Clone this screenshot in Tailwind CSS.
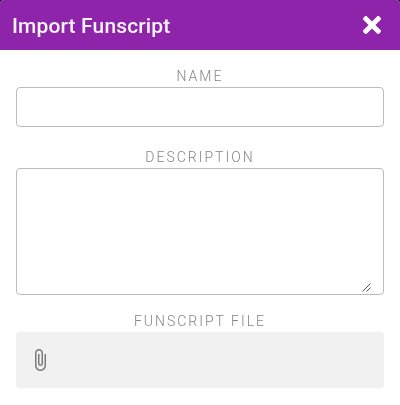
<!DOCTYPE html>
<html lang="en">
<head>
<meta charset="utf-8">
<title>Import Funscript</title>
<script src="https://cdn.jsdelivr.net/npm/@tailwindcss/browser@4"></script>
</head>
<body class="bg-black font-[Roboto,sans-serif]">
<main class="h-[405px] w-[400px] overflow-hidden rounded-t bg-white">
  <header class="flex h-[50px] items-center justify-between bg-[#8e24aa] pl-3 pr-[19px] text-white">
    <h1 class="pt-[2px] text-[21px] leading-6 font-medium tracking-[0.14px] text-white/95 will-change-transform">Import Funscript</h1>
    <button aria-label="Close"><svg class="block h-[26px] w-[18px]" viewBox="0 0 352 512" fill="currentColor"><path d="M242.72 256l100.07-100.07c12.28-12.28 12.28-32.19 0-44.48l-22.24-22.24c-12.28-12.28-32.19-12.28-44.48 0L176 189.28 75.93 89.21c-12.28-12.28-32.19-12.28-44.48 0L9.21 111.45c-12.28 12.28-12.28 32.19 0 44.48L109.28 256 9.21 356.07c-12.28 12.28-12.28 32.19 0 44.48l22.24 22.24c12.28 12.28 32.2 12.28 44.48 0L176 322.72l100.07 100.07c12.28 12.28 32.2 12.28 44.48 0l22.24-22.24c12.28-12.28 12.28-32.19 0-44.48L242.72 256z"/></svg></button>
  </header>
  <form class="flex flex-col px-4 pt-4">
    <label for="name" class="h-[21px] text-center text-[14px] leading-[21px] font-light tracking-[2px] text-[#858585] will-change-transform">NAME</label>
    <input id="name" class="h-10 rounded border border-[#bcbcbc] px-3 outline-none">
    <label for="description" class="mt-5 h-[21px] text-center text-[14px] leading-[21px] font-light tracking-[2px] text-[#858585] will-change-transform">DESCRIPTION</label>
    <div class="flex h-[127px] items-end rounded border border-[#bcbcbc] pr-[12px] pb-[2px] pl-3">
      <textarea id="description" class="block h-[123px] w-full resize-none outline-none"></textarea>
      <svg class="h-[9px] w-[9px] shrink-0" viewBox="0 0 9 9" fill="none" stroke="#444" stroke-width="0.9"><path d="M.5 8.5l8-8M4.5 8.5l4-4"/></svg>
    </div>
    <label class="mt-4 h-[21px] text-center text-[14px] leading-[21px] font-light tracking-[2px] text-[#858585] will-change-transform">FUNSCRIPT FILE</label>
    <div class="flex h-14 items-center rounded bg-[#f1f1f1] pl-3">
      <svg class="size-6" viewBox="0 0 24 24" fill="#7b7b7b"><path d="M16.5 6v11.5c0 2.21-1.79 4-4 4s-4-1.79-4-4V5c0-1.38 1.12-2.5 2.5-2.5s2.5 1.12 2.5 2.5v10.5c0 .55-.45 1-1 1s-1-.45-1-1V6H10v9.5c0 1.38 1.12 2.5 2.5 2.5s2.5-1.12 2.5-2.5V5c0-2.21-1.79-4-4-4S7 2.79 7 5v12.5c0 3.04 2.46 5.5 5.5 5.5s5.5-2.46 5.5-5.5V6h-1.5z"/></svg>
    </div>
  </form>
</main>
</body>
</html>
